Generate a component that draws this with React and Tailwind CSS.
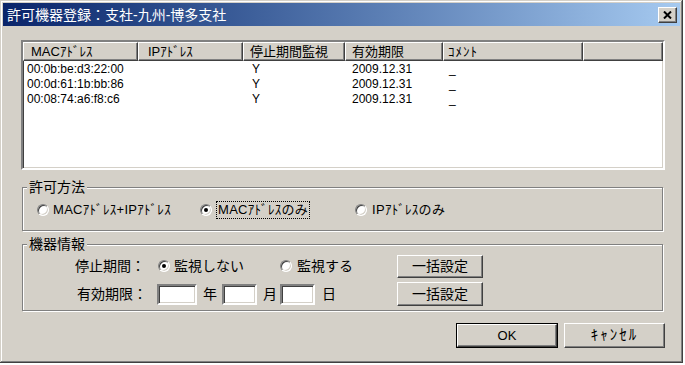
import React from "react";

const raised =
  "bg-[#d4d0c8] border border-t-white border-l-white border-r-[#404040] border-b-[#404040] shadow-[inset_-1px_-1px_#808080]";
const sunken =
  "bg-white border-2 border-t-[#808080] border-l-[#808080] border-r-white border-b-white shadow-[inset_1px_1px_#404040,inset_-1px_-1px_#d4d0c8]";

const columns = [
  { title: "MACｱﾄﾞﾚｽ", w: "w-[115px]", pad: "pl-[4px]", hpad: "pl-[7px]" },
  { title: "IPｱﾄﾞﾚｽ", w: "w-[105px]", pad: "pl-[6px]", hpad: "pl-[9px]" },
  { title: "停止期間監視", w: "w-[102px]", pad: "pl-[9px]", hpad: "pl-[6px]" },
  { title: "有効期限", w: "w-[98px]", pad: "pl-[7px]", hpad: "pl-[6px]" },
  { title: "ｺﾒﾝﾄ", w: "w-[140px]", pad: "pl-[6px]", hpad: "pl-[4px] tracking-[1px]" },
];

const rows = [
  ["00:0b:be:d3:22:00", "", "Y", "2009.12.31", "_"],
  ["00:0d:61:1b:bb:86", "", "Y", "2009.12.31", "_"],
  ["00:08:74:a6:f8:c6", "", "Y", "2009.12.31", "_"],
];

function Radio({ checked }) {
  return (
    <span className="w-[12px] h-[12px] rounded-full bg-white border border-t-[#808080] border-l-[#808080] border-r-white border-b-white shadow-[inset_1px_1px_#404040,inset_-1px_-1px_#d4d0c8] flex items-center justify-center shrink-0">
      {checked && <span className="w-[4px] h-[4px] rounded-full bg-black" />}
    </span>
  );
}

function GroupBox({ label, className, children }) {
  return (
    <div
      className={`relative border border-[#808080] shadow-[1px_1px_0_#ffffff,inset_1px_1px_0_#ffffff] ${className}`}
    >
      <span className="absolute -top-[11px] left-[4px] px-[2px] bg-[#d4d0c8] text-[14px] leading-[20px]">
        {label}
      </span>
      {children}
    </div>
  );
}

const App = () => {
  return (
    <div className="w-[685px] h-[365px] bg-white font-['Liberation_Sans','Noto_Sans_CJK_JP',sans-serif] text-black">
      <div className="w-[683px] h-[363px] bg-[#d4d0c8] p-[3px] flex flex-col shadow-[inset_-1px_-1px_#404040,inset_1px_1px_#d4d0c8,inset_-2px_-2px_#808080,inset_2px_2px_#ffffff]">
        {/* title bar */}
        <div className="h-[23px] flex items-center justify-between pl-[4px] pr-[3px] bg-gradient-to-r from-[#0a246a] to-[#a6caf0]">
          <span className="text-white text-[14px] leading-none">
            許可機器登録：支社-九州-博多支社
          </span>
          <button className={`w-[19px] h-[16px] flex items-center justify-center ${raised}`}>
            <svg width="9" height="8" viewBox="0 0 9 8">
              <path d="M1 0.5 L8 7.5 M8 0.5 L1 7.5" stroke="#000" strokeWidth="2" />
            </svg>
          </button>
        </div>

        <div className="flex flex-col pl-[18px] pt-[14px]">
          {/* list view */}
          <div className={`w-[644px] h-[130px] ${sunken} flex flex-col`}>
            <div className="flex h-[19px] text-[13px]">
              {columns.map((c) => (
                <div
                  key={c.title}
                  className={`${c.w} ${c.hpad} ${raised} flex items-center whitespace-nowrap overflow-hidden`}
                >
                  {c.title}
                </div>
              ))}
              <div className={`flex-1 ${raised}`} />
            </div>
            <div className="flex flex-col text-[12px] leading-[15px] pt-px">
              {rows.map((r, i) => (
                <div key={i} className="flex h-[15px]">
                  {r.map((cell, j) => (
                    <div key={j} className={`${columns[j].w} ${columns[j].pad} whitespace-nowrap`}>
                      {cell}
                    </div>
                  ))}
                </div>
              ))}
            </div>
          </div>

          {/* 許可方法 */}
          <GroupBox label="許可方法" className="ml-px mt-[17px] w-[641px] h-[44px]">
            <div className="flex items-center h-full pl-[14px] text-[13px] pt-px">
              <label className="w-[163px] flex items-center gap-[4px]">
                <Radio />
                <span className="tracking-[0.3px]">MACｱﾄﾞﾚｽ+IPｱﾄﾞﾚｽ</span>
              </label>
              <label className="w-[155px] flex items-center gap-[4px]">
                <Radio checked />
                <span className="border border-dotted border-black px-[1px] leading-[16px] tracking-[0.3px]">
                  MACｱﾄﾞﾚｽのみ
                </span>
              </label>
              <label className="flex items-center gap-[5px]">
                <Radio />
                <span className="tracking-[0.3px]">IPｱﾄﾞﾚｽのみ</span>
              </label>
            </div>
          </GroupBox>

          {/* 機器情報 */}
          <GroupBox label="機器情報" className="ml-px mt-[13px] w-[641px] h-[67px]">
            <div className="flex flex-col gap-[4px] pt-[9px] pl-[52px] text-[14px]">
              <div className="flex items-center h-[24px]">
                <span className="w-[83px]">停止期間：</span>
                <label className="w-[122px] flex items-center gap-[4px]">
                  <Radio checked />
                  <span>監視しない</span>
                </label>
                <label className="w-[117px] flex items-center gap-[5px]">
                  <Radio />
                  <span>監視する</span>
                </label>
                <button className={`w-[86px] h-[23px] ${raised}`}>一括設定</button>
              </div>
              <div className="flex items-center h-[24px]">
                <span className="w-[82px] pl-[2px]">有効期限：</span>
                <input className={`w-[40px] h-[21px] ${sunken}`} />
                <span className="ml-[6px] mr-[5px]">年</span>
                <input className={`w-[35px] h-[21px] ${sunken}`} />
                <span className="ml-[6px] mr-[3px]">月</span>
                <input className={`w-[35px] h-[21px] ${sunken}`} />
                <span className="ml-[7px]">日</span>
                <button className={`ml-[61px] w-[86px] h-[24px] ${raised}`}>一括設定</button>
              </div>
            </div>
          </GroupBox>

          {/* dialog buttons */}
          <div className="w-[644px] flex justify-end gap-[6px] mt-[12px] text-[13px]">
            <button className="w-[102px] h-[25px] border border-black flex">
              <span className={`flex-1 flex items-center justify-center ${raised}`}>OK</span>
            </button>
            <button className={`w-[101px] h-[25px] text-[15px] tracking-[2px] ${raised}`}>
              ｷｬﾝｾﾙ
            </button>
          </div>
        </div>
      </div>
    </div>
  );
};

export default App;
